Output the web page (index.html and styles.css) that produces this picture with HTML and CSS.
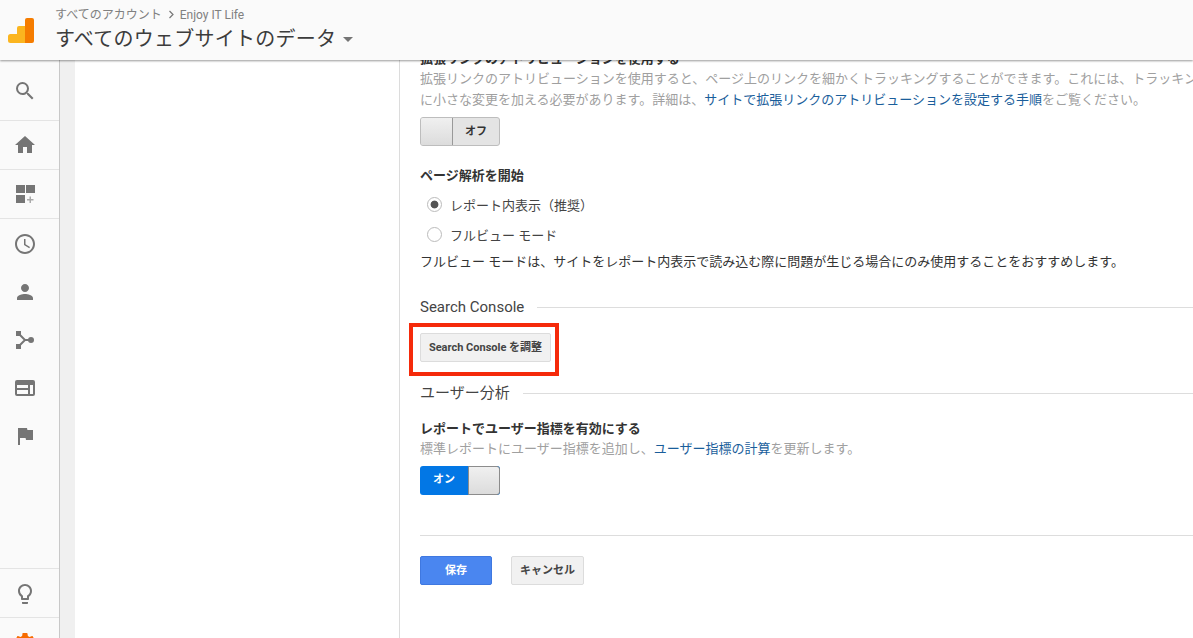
FILE: index.html
```html
<!DOCTYPE html>
<html lang="ja">
<head>
<meta charset="utf-8">
<title>Google Analytics</title>
<link rel="stylesheet" href="styles.css">
</head>
<body>
<header class="topbar">
  <svg class="logo" width="26" height="26" viewBox="0 0 26 26">
    <path d="M11 8h7v17H2.500A2.500 2.500 0 0 1 0 22.500v-4A2.500 2.500 0 0 1 2.500 16H9v-6a2 2 0 0 1 2-2z" fill="#fbb51f"/>
    <path d="M19 0h5a2 2 0 0 1 2 2v21a2 2 0 0 1-2 2h-7V2a2 2 0 0 1 2-2z" fill="#f57c00"/>
  </svg>
  <div class="titles">
    <div class="crumb"><span>すべてのアカウント</span><svg class="chev" width="7" height="9" viewBox="0 0 7 9"><path d="M1.500 1l3.500 3.500L1.500 8" fill="none" stroke="#777" stroke-width="1.200"/></svg><span>Enjoy IT Life</span></div>
    <div class="view"><span>すべてのウェブサイトのデータ</span><i class="caret"></i></div>
  </div>
</header>
<div class="shell">
  <nav class="side">
    <div class="side-top">
      <div class="cell cell-search"><svg width="24" height="24" viewBox="0 0 24 24"><path d="M15.500 14h-.79l-.28-.27A6.470 6.470 0 0 0 16 9.500 6.500 6.500 0 1 0 9.500 16c1.610 0 3.090-.59 4.230-1.570l.27.28v.79l5 4.990L20.490 19l-4.990-5zm-6 0C7.010 14 5 11.990 5 9.500S7.010 5 9.500 5 14 7.010 14 9.500 11.990 14 9.500 14z"/></svg></div>
      <div class="cell cell-tall"><svg width="24" height="24" viewBox="0 0 24 24"><path d="M10 20v-6h4v6h5v-8h3L12 3 2 12h3v8z"/></svg></div>
      <div class="cell cell-tall"><svg width="24" height="24" viewBox="0 0 24 24"><path d="M3 3h9v8H3zM13 3h9v8h-9zM3 13h9v8H3z"/><path d="M16.500 14.500h1.500v2.500h2.500v1.500H18V21h-1.500v-2.500H14V17h2.500z" fill="#aaa"/></svg></div>
      <div class="group">
        <div class="item"><svg width="24" height="24" viewBox="0 0 24 24"><path d="M11.990 2C6.470 2 2 6.480 2 12s4.470 10 9.990 10C17.520 22 22 17.520 22 12S17.520 2 11.990 2zM12 20c-4.420 0-8-3.580-8-8s3.580-8 8-8 8 3.580 8 8-3.580 8-8 8zm.5-13H11v6l5.250 3.150.75-1.230-4.500-2.670z"/></svg></div>
        <div class="item"><svg width="24" height="24" viewBox="0 0 24 24"><path d="M12 12c2.210 0 4-1.790 4-4s-1.790-4-4-4-4 1.790-4 4 1.790 4 4 4zm0 2c-2.670 0-8 1.340-8 4v2h16v-2c0-2.660-5.330-4-8-4z"/></svg></div>
        <div class="item"><svg width="24" height="24" viewBox="0 0 24 24"><path d="M3 3h5v5H3zM3 16h5v5H3z"/><circle cx="18" cy="12" r="3"/><path class="line" d="M6 6l6 6-6 6M12 12h6"/></svg></div>
        <div class="item"><svg width="24" height="24" viewBox="0 0 24 24"><path fill-rule="evenodd" d="M4 4h16a2 2 0 0 1 2 2v12a2 2 0 0 1-2 2H4a2 2 0 0 1-2-2V6a2 2 0 0 1 2-2zm0 5v3h11V9zm0 5v4h11v-4zm13-5v9h3V9z"/></svg></div>
        <div class="item"><svg width="24" height="24" viewBox="0 0 24 24"><path d="M14.400 6L14 4H5v17h2v-7h5.600l.4 2h7V6z"/></svg></div>
      </div>
    </div>
    <div class="side-bottom">
      <div class="cell cell-tall"><svg width="24" height="24" viewBox="0 0 24 24"><path d="M9 21c0 .55.45 1 1 1h4c.55 0 1-.45 1-1v-1H9v1zm3-19C8.140 2 5 5.140 5 9c0 2.380 1.190 4.470 3 5.740V17c0 .55.45 1 1 1h6c.55 0 1-.45 1-1v-2.260c1.810-1.270 3-3.360 3-5.740 0-3.860-3.140-7-7-7zm2.850 11.100l-.85.6V16h-4v-2.300l-.85-.6A4.997 4.997 0 0 1 7 9c0-2.760 2.240-5 5-5s5 2.240 5 5c0 1.630-.8 3.160-2.150 4.100z"/></svg></div>
      <div class="cell cell-gear"><svg width="24" height="24" viewBox="0 0 24 24"><path fill="#f76b00" d="M19.430 12.980c.04-.32.07-.64.07-.98s-.03-.66-.07-.98l2.110-1.650c.19-.15.24-.42.12-.64l-2-3.460c-.12-.22-.39-.3-.61-.22l-2.490 1c-.52-.4-1.080-.73-1.690-.98l-.38-2.650A.49.49 0 0 0 14 2h-4c-.25 0-.46.18-.49.42l-.38 2.650c-.61.25-1.170.59-1.690.98l-2.490-1c-.23-.09-.49 0-.61.22l-2 3.460c-.13.22-.7.49.12.64l2.110 1.650c-.04.32-.07.65-.07.98s.03.66.07.98l-2.110 1.650c-.19.15-.24.42-.12.64l2 3.460c.12.22.39.3.61.22l2.490-1c.52.4 1.080.73 1.690.98l.38 2.650c.03.24.24.42.49.42h4c.25 0 .46-.18.49-.42l.38-2.650c.61-.25 1.170-.59 1.690-.98l2.490 1c.23.09.49 0 .61-.22l2-3.460c.12-.22.07-.49-.12-.64l-2.110-1.650z"/></svg></div>
    </div>
  </nav>
  <div class="gutter"></div>
  <aside class="column"></aside>
  <main class="main">
    <div class="content">
      <div class="strong first">拡張リンクのアトリビューションを使用する</div>
      <p class="hint wide">拡張リンクのアトリビューションを使用すると、ページ上のリンクを細かくトラッキングすることができます。これには、トラッキング コード<br>に小さな変更を加える必要があります。詳細は、<a href="#">サイトで拡張リンクのアトリビューションを設定する手順</a>をご覧ください。</p>
      <div class="toggle off"><span class="knob"></span><span class="toggle-label">オフ</span></div>

      <div class="strong analysis">ページ解析を開始</div>
      <label class="radio radio-first"><i class="dot on"></i>レポート内表示（推奨）</label>
      <label class="radio"><i class="dot"></i>フルビュー モード</label>
      <p class="note">フルビュー モードは、サイトをレポート内表示で読み込む際に問題が生じる場合にのみ使用することをおすすめします。</p>

      <div class="section section-sc"><span>Search Console</span><hr></div>
      <div class="highlight-wrap">
        <button class="btn sc-btn" type="button">Search Console を調整</button>
        <div class="highlight"></div>
      </div>

      <div class="section section-user"><span>ユーザー分析</span><hr></div>
      <div class="strong metrics">レポートでユーザー指標を有効にする</div>
      <p class="hint single">標準レポートにユーザー指標を追加し、<a href="#">ユーザー指標の計算</a>を更新します。</p>
      <div class="toggle on"><span class="toggle-label">オン</span><span class="knob"></span></div>

      <hr class="rule">
      <div class="actions">
        <button class="btn primary" type="button">保存</button>
        <button class="btn cancel" type="button">キャンセル</button>
      </div>
    </div>
  </main>
</div>
</body>
</html>
```
FILE: styles.css
```css
* { box-sizing: border-box; }
html, body { margin: 0; height: 100%; overflow: hidden; }
body {
  font-family: Roboto, "Noto Sans CJK JP", "Liberation Sans", sans-serif;
  color: #333;
  background: #fff;
  display: flex;
  flex-direction: column;
}
.topbar {
  height: 60px;
  flex: none;
  background: #fafafa;
  display: flex;
  align-items: center;
  position: relative;
  z-index: 5;
  padding-left: 8px;
  box-shadow: 0 1px 2px rgba(0,0,0,.4);
}
.logo { margin: 2px 22px 0 0; flex: none; width: 26px; height: 26px; }
.titles { display: flex; flex-direction: column; margin-top: 0; margin-left: -1px; }
.crumb {
  font-size: 12px;
  line-height: 16px;
  color: #808080;
  display: flex;
  align-items: center;
}
.chev { margin: 0 5px 0 6px; }
.view {
  font-size: 20px;
  line-height: 30px;
  color: #3c3c3c;
  display: flex;
  align-items: center;
  margin-top: 1px;
  letter-spacing: .25px;
}
.caret {
  width: 0; height: 0;
  border-left: 5px solid transparent;
  border-right: 5px solid transparent;
  border-top: 5px solid #757575;
  margin: 2px 0 0 7px;
}
.shell { flex: 1; min-height: 0; display: flex; }
.side {
  width: 60px;
  flex: none;
  background: #fafafa;
  border-right: 1px solid #c8c8c8;
  box-shadow: 1px 0 1px rgba(0,0,0,.06);
  display: flex;
  flex-direction: column;
  justify-content: space-between;
  overflow: hidden;
}
.side svg { fill: #757575; display: block; }
.side svg .line { fill: none; stroke: #757575; stroke-width: 2; }
.cell {
  display: flex;
  align-items: center;
  justify-content: center;
  padding-right: 9px;
  border-bottom: 1px solid #e4e4e4;
}
.cell-search { height: 61px; padding-top: 2px; }
.cell-tall { height: 49px; }
.group { padding-top: 1px; }
.item { height: 48px; display: flex; align-items: center; justify-content: center; padding-right: 9px; }
.side-bottom { height: 70px; flex: none; border-top: 1px solid #e4e4e4; }
.side-bottom .cell-tall { padding-top: 2px; }
.cell-gear { border: 0; height: 21px; align-items: flex-start; padding-top: 13px; }
.gutter { width: 15px; flex: none; background: #f0f0f0; }
.column { width: 325px; flex: none; background: #fff; border-right: 1px solid #dcdcdc; }
.main { flex: 1; min-width: 0; overflow: hidden; }
.content { width: 900px; padding-left: 20px; margin-top: -11px; }
.strong { font-size: 13px; font-weight: 700; line-height: 20px; color: #333; }
p { margin: 0; }
.hint { font-size: 13px; line-height: 21px; color: #a0a0a0; }
.hint.wide { margin-top: -1px; white-space: nowrap; }
a { color: #1a5e9b; text-decoration: none; }
.toggle {
  width: 80px;
  height: 29px;
  border-radius: 3px;
  display: flex;
  font-size: 11px;
  font-weight: 700;
}
.toggle.off { margin-top: 7px; background: #e4e4e4; border: 1px solid #bdbdbd; overflow: hidden; }
.toggle.on { background: #0277e5; margin-top: 7px; }
.toggle.off .knob { border-right: 1px solid #999; }
.toggle.on .knob { border: 1px solid #8c8c8c; border-radius: 0 3px 3px 0; }
.knob { width: 32px; flex: none; background: linear-gradient(#f0f0f0, #dcdcdc); }
.toggle-label { flex: 1; text-align: center; line-height: 27px; }
.toggle.off .toggle-label { color: #333; }
.toggle.on .toggle-label { color: #fff; }
.analysis { margin-top: 20px; }
.radio {
  display: flex;
  align-items: center;
  font-size: 13px;
  color: #444;
  height: 30px;
  padding-left: 7px;
}
.radio-first { margin-top: 3px; }
.dot {
  width: 15px; height: 15px;
  border: 1px solid #bbb;
  border-radius: 50%;
  margin-right: 8px;
  background: #fff;
  display: flex;
}
.dot.on { background: radial-gradient(circle, #555 0 3.500px, #fff 4.300px); }
.note { font-size: 13px; line-height: 20px; color: #333; margin-top: 3px; }
.section { display: flex; align-items: center; font-size: 15px; color: #444; line-height: 20px; }
.section span { flex: none; margin-right: 13px; }
.section hr { flex: 1; border: 0; border-top: 1px solid #ddd; margin: 0; }
.section-sc { margin-top: 25px; }
.btn {
  font-family: inherit;
  font-size: 11px;
  font-weight: 700;
  border-radius: 2px;
  padding: 0 0 3px;
  color: #444;
  background: #f1f1f1;
  border: 1px solid #dcdcdc;
}
.highlight-wrap { position: relative; width: 131px; height: 29px; margin-top: 16px; }
.sc-btn { width: 131px; height: 29px; }
.highlight {
  position: absolute;
  left: -11px; top: -10px;
  width: 150px; height: 53px;
  border: 4px solid #f52a0a;
  pointer-events: none;
}
.section-user { margin-top: 21px; }
.metrics { margin-top: 16px; }
.hint.single { line-height: 20px; margin-top: 0; }
.rule { border: 0; border-top: 1px solid #ddd; margin: 40px 0 0; }
.actions { display: flex; gap: 19px; margin-top: 20px; }
.primary { width: 72px; height: 29px; color: #fff; background: #4a86f0; border-color: #3f78e0; }
.cancel { width: 73px; height: 29px; }
```
